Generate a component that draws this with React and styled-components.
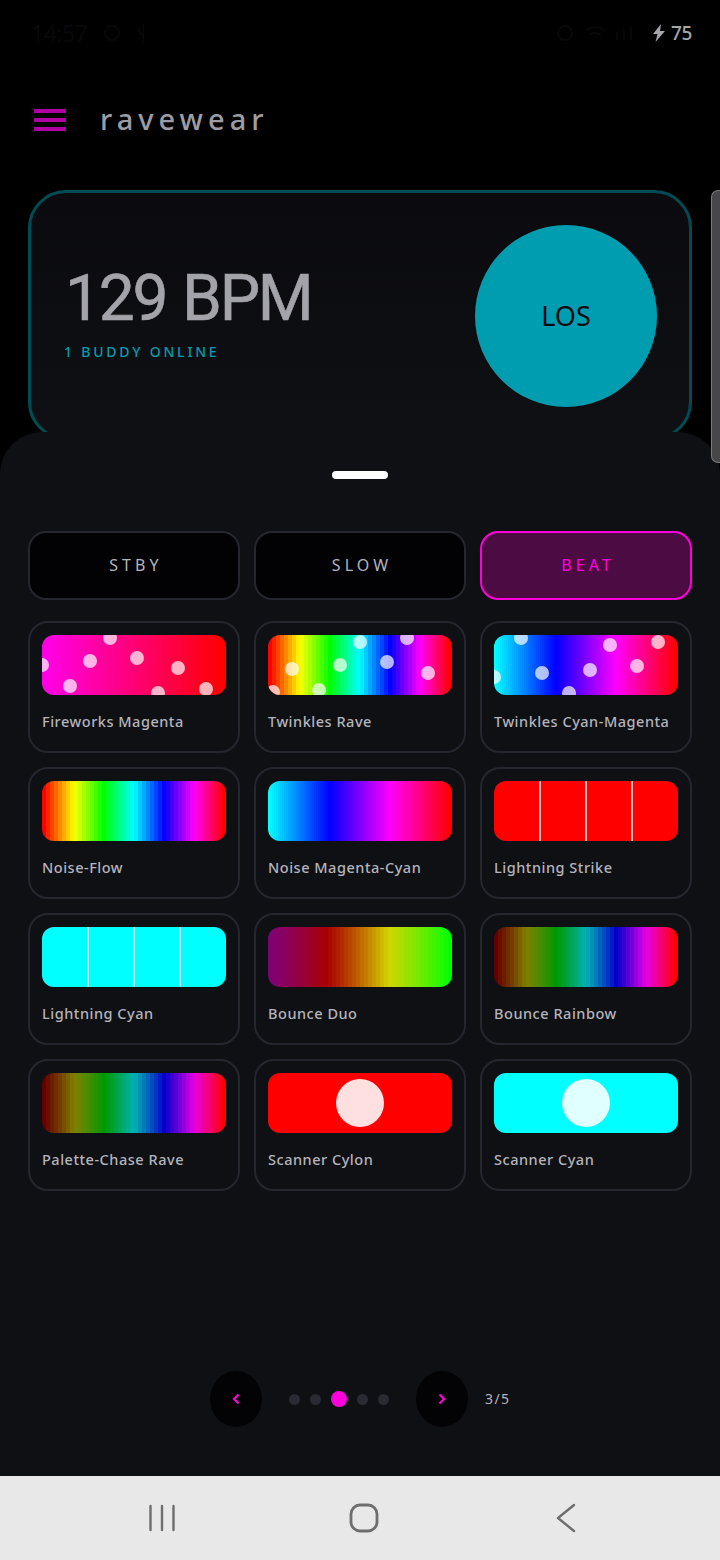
import React from "react";
import styled, { createGlobalStyle } from "styled-components";

const GlobalStyle = createGlobalStyle`
  html, body { margin: 0; padding: 0; background: #000; }
  * { box-sizing: border-box; }
  body { font-family: "Noto Sans", "Open Sans", sans-serif; }
`;

// builds a banded gradient, one flat stripe per step
const bands = (count, colorAt) => {
  const stops = [];
  for (let i = 0; i < count; i++) {
    const c = colorAt(i / (count - 1));
    stops.push(`${c} ${(i / count) * 100}% ${((i + 1) / count) * 100}%`);
  }
  return `linear-gradient(90deg, ${stops.join(",")})`;
};

const hsl = (h, light) => `hsl(${h}, 100%, ${light}%)`;

const rainbow = bands(46, t => hsl(t * 360, 50));
const cyanMagenta = bands(92, t => hsl(180 + t * 180, 50));
const fireworks = bands(92, t => hsl(305 + t * 55, 50));
const duo = bands(46, t => hsl(305 + t * 175, 25 + t * 25));
const dimRainbow = bands(46, t => hsl(t * 360, 20 + t * 30));

const patterns = [
  {
    name: "Fireworks Magenta",
    bg: fireworks,
    dots: [[68, 3], [0, 30], [48, 26], [95, 23], [136, 33], [28, 51], [116, 58], [164, 54]],
  },
  {
    name: "Twinkles Rave",
    bg: rainbow,
    dots: [[92, 7], [139, 3], [24, 34], [72, 30], [119, 27], [160, 38], [5, 57], [51, 55]],
  },
  {
    name: "Twinkles Cyan-Magenta",
    bg: cyanMagenta,
    dots: [[27, 3], [0, 42], [48, 38], [96, 35], [116, 10], [143, 31], [164, 7], [75, 58]],
  },
  { name: "Noise-Flow", bg: rainbow },
  { name: "Noise Magenta-Cyan", bg: cyanMagenta },
  { name: "Lightning Strike", bg: "#ff0000", lines: true },
  { name: "Lightning Cyan", bg: "#00ffff", lines: true },
  { name: "Bounce Duo", bg: duo },
  { name: "Bounce Rainbow", bg: dimRainbow },
  { name: "Palette-Chase Rave", bg: dimRainbow },
  { name: "Scanner Cylon", bg: "#ff0000", scanner: true },
  { name: "Scanner Cyan", bg: "#00ffff", scanner: true },
];

const Screen = styled.div`
  width: 720px;
  height: 1560px;
  display: flex;
  flex-direction: column;
  background: #000;
  overflow: hidden;
  position: relative;
`;

const StatusBar = styled.div`
  height: 66px;
  padding: 0 28px 0 31px;
  display: flex;
  align-items: center;
  justify-content: space-between;
`;

const StatusGroup = styled.div`
  display: flex;
  align-items: center;
  gap: 5px;
`;

const Clock = styled.span`
  font-size: 23px;
  letter-spacing: -0.5px;
  color: #08080a;
`;

const Battery = styled.span`
  font-size: 19px;
  font-weight: 500;
  letter-spacing: -0.4px;
  color: #a6a6aa;
`;

const Header = styled.header`
  height: 108px;
  padding: 0 34px;
  display: flex;
  align-items: center;
  gap: 34px;
`;

const Burger = styled.div`
  width: 32px;
  display: flex;
  flex-direction: column;
  gap: 5px;
`;

const BurgerLine = styled.span`
  display: block;
  height: 4px;
  background: #b000a4;
`;

const Title = styled.div`
  font-size: 29px;
  font-weight: 500;
  letter-spacing: 5px;
  color: #9c9ca2;
  line-height: 1;
  margin-top: -4px;
`;

const HeroCard = styled.section`
  margin: 16px 28px -8px;
  height: 250px;
  flex: none;
  border: 3px solid #004c54;
  border-radius: 38px;
  background: linear-gradient(180deg, #0b0b0f, #0f1014);
  padding: 32px 32px 0 36px;
  display: flex;
  justify-content: space-between;
`;

const HeroText = styled.div`
  display: flex;
  flex-direction: column;
  padding-top: 36px;
`;

const Bpm = styled.div`
  font-family: Roboto, "Noto Sans", sans-serif;
  font-size: 64px;
  line-height: 76px;
  letter-spacing: -2.2px;
  word-spacing: 2px;
  margin-left: -2px;
  color: #a3a3a9;
  -webkit-text-stroke: 0.6px #a3a3a9;
`;

const Buddy = styled.div`
  font-size: 14px;
  font-weight: 500;
  line-height: 20px;
  letter-spacing: 2.8px;
  color: #009db0;
  margin: 5px 0 0 -3px;
`;

const GoButton = styled.div`
  width: 182px;
  height: 182px;
  padding-bottom: 2px;
  border-radius: 50%;
  background: #009db0;
  color: #0a0a10;
  font-size: 27px;
  display: flex;
  align-items: center;
  justify-content: center;
`;

const SidePanel = styled.div`
  position: absolute;
  right: 0;
  top: 190px;
  width: 9px;
  height: 273px;
  background: #47474a;
  border: 1px solid #7a7a7d;
  border-right: none;
  border-radius: 7px 0 0 7px;
`;

const Sheet = styled.main`
  position: relative;
  flex: 1;
  background: #0f1014;
  border-radius: 42px 42px 0 0;
  padding: 39px 28px 0;
  display: flex;
  flex-direction: column;
`;

const Handle = styled.div`
  width: 56px;
  height: 8px;
  border-radius: 4px;
  background: #fff;
  align-self: center;
`;

const Modes = styled.div`
  display: grid;
  grid-template-columns: repeat(3, 1fr);
  gap: 14px;
  margin-top: 52px;
`;

const ModeButton = styled.div`
  height: 69px;
  padding: 0 0 2px 4px;
  border-radius: 18px;
  border: 2px solid ${p => (p.$active ? "#ff00dd" : "#26262e")};
  background: ${p => (p.$active ? "#4d0b44" : "#020204")};
  color: ${p => (p.$active ? "#ff00dd" : "#b4b4bc")};
  font-size: 16px;
  letter-spacing: 4.1px;
  display: flex;
  align-items: center;
  justify-content: center;
`;

const Grid = styled.div`
  display: grid;
  grid-template-columns: repeat(3, 1fr);
  gap: 14px;
  margin-top: 21px;
`;

const PatternCard = styled.div`
  height: 132px;
  border: 2px solid #26262e;
  border-radius: 20px;
  padding: 12px;
  display: flex;
  flex-direction: column;
`;

const Thumb = styled.div`
  position: relative;
  height: 60px;
  flex: none;
  border-radius: 12px;
  overflow: hidden;
  background: ${p => p.$bg};
`;

const Spark = styled.span`
  position: absolute;
  width: 14px;
  height: 14px;
  margin: -7px 0 0 -7px;
  border-radius: 50%;
  background: rgba(255, 255, 255, 0.7);
`;

const Bolt = styled.span`
  position: absolute;
  top: 0;
  bottom: 0;
  left: ${p => p.$at}%;
  margin-left: -1px;
  width: 1.5px;
  background: rgba(255, 255, 255, 0.75);
`;

const Eye = styled.span`
  position: absolute;
  left: 50%;
  top: 50%;
  width: 48px;
  height: 48px;
  margin: -24px 0 0 -24px;
  border-radius: 50%;
  background: rgba(255, 255, 255, 0.88);
`;

const PatternName = styled.div`
  margin-top: 16px;
  font-size: 14.5px;
  font-weight: 500;
  line-height: 20px;
  letter-spacing: 0.52px;
  color: #b4b4bc;
  white-space: nowrap;
`;

const Pager = styled.div`
  margin-top: auto;
  margin-bottom: 49px;
  padding-left: 182px;
  display: flex;
  align-items: center;
`;

const PageButton = styled.div`
  width: 52px;
  height: 56px;
  border-radius: 50%;
  background: #030306;
  display: flex;
  align-items: center;
  justify-content: center;
`;

const Dots = styled.div`
  width: 154px;
  padding-right: 1px;
  display: flex;
  align-items: center;
  justify-content: center;
  gap: 10px;
`;

const PageDot = styled.span`
  width: ${p => (p.$active ? 16 : 11)}px;
  height: ${p => (p.$active ? 16 : 11)}px;
  border-radius: 50%;
  background: ${p => (p.$active ? "#ff00dd" : "#2a2a33")};
`;

const PageCount = styled.span`
  margin: -2px 0 0 17px;
  font-size: 14px;
  letter-spacing: 1.4px;
  color: #b4b4bc;
`;

const NavBar = styled.nav`
  height: 84px;
  flex: none;
  background: #e8e8e8;
  padding-left: 7px;
  display: grid;
  grid-template-columns: repeat(3, 202px);
  justify-content: center;
  align-items: center;
  justify-items: center;
`;

const Chevron = ({ dir }) => (
  <svg width="12" height="14" viewBox="0 0 12 14" fill="none" stroke="#ff00dd" strokeWidth="2.2">
    <path d={dir === "left" ? "M8.5 2.5 4 7l4.5 4.5" : "M3.5 2.5 8 7l-4.5 4.5"} />
  </svg>
);

export default function App() {
  return (
    <Screen>
      <GlobalStyle />
      <StatusBar>
        <StatusGroup>
          <Clock>14:57</Clock>
          <svg width="52" height="22" viewBox="0 0 52 22" fill="none" stroke="#08080a" strokeWidth="2">
            <circle cx="20" cy="11" r="7" />
            <path d="M52 2v18M47 6c0 5 2 7 5 7" />
          </svg>
        </StatusGroup>
        <StatusGroup>
          <svg width="92" height="20" viewBox="0 0 92 20" fill="none" stroke="#08080a" strokeWidth="2">
            <circle cx="10" cy="10" r="7" />
            <path d="M30 8c6-5 14-5 20 0M34 12c4-3 8-3 12 0M62 17V9M69 17V6M76 17V3" />
          </svg>
          <svg width="14" height="18" viewBox="0 0 14 18" fill="#a6a6aa">
            <path d="M9 0 1 10h4.500L3.500 18 13 7H8z" />
          </svg>
          <Battery>75</Battery>
        </StatusGroup>
      </StatusBar>

      <Header>
        <Burger>
          <BurgerLine />
          <BurgerLine />
          <BurgerLine />
        </Burger>
        <Title>ravewear</Title>
      </Header>

      <HeroCard>
        <HeroText>
          <Bpm>129 BPM</Bpm>
          <Buddy>1 BUDDY ONLINE</Buddy>
        </HeroText>
        <GoButton>LOS</GoButton>
      </HeroCard>

      <Sheet>
        <Handle />
        <Modes>
          <ModeButton>STBY</ModeButton>
          <ModeButton>SLOW</ModeButton>
          <ModeButton $active>BEAT</ModeButton>
        </Modes>
        <Grid>
          {patterns.map(p => (
            <PatternCard key={p.name}>
              <Thumb $bg={p.bg}>
                {p.dots && p.dots.map(([x, y]) => (
                  <Spark key={`${x}-${y}`} style={{ left: x, top: y }} />
                ))}
                {p.lines && [25, 50, 75].map(at => <Bolt key={at} $at={at} />)}
                {p.scanner && <Eye />}
              </Thumb>
              <PatternName>{p.name}</PatternName>
            </PatternCard>
          ))}
        </Grid>
        <Pager>
          <PageButton><Chevron dir="left" /></PageButton>
          <Dots>
            <PageDot />
            <PageDot />
            <PageDot $active />
            <PageDot />
            <PageDot />
          </Dots>
          <PageButton><Chevron dir="right" /></PageButton>
          <PageCount>3/5</PageCount>
        </Pager>
      </Sheet>
      <SidePanel />

      <NavBar>
        <svg width="28" height="28" viewBox="0 0 28 28" fill="none" stroke="#6e6e6e" strokeWidth="2.4" strokeLinecap="round">
          <path d="M2.500 2v24M14 2v24M25.500 2v24" />
        </svg>
        <svg width="30" height="30" viewBox="0 0 30 30" fill="none" stroke="#6e6e6e" strokeWidth="2.800">
          <rect x="2" y="2" width="26" height="26" rx="9" />
        </svg>
        <svg width="20" height="30" viewBox="0 0 20 30" fill="none" stroke="#6e6e6e" strokeWidth="2.400" strokeLinecap="round" strokeLinejoin="round">
          <path d="M18 2 2 15l16 13" />
        </svg>
      </NavBar>
    </Screen>
  );
}
